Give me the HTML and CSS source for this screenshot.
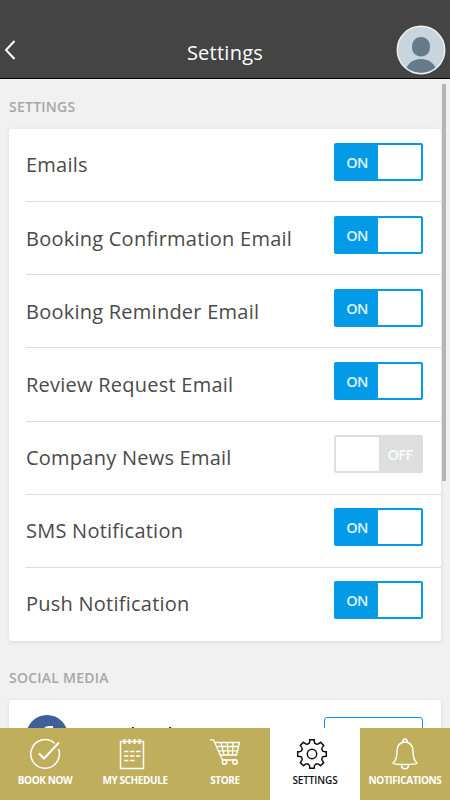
FILE: index.html
```html
<!DOCTYPE html>
<html lang="en">
<head>
<meta charset="utf-8">
<title>Settings</title>
<link rel="stylesheet" href="styles.css">
</head>
<body>
<div class="app">
  <header class="header">
    <svg class="back" width="12" height="20" viewBox="0 0 12 20"><path d="M10.500 1 2 10l8.500 9"/></svg>
    <h1 class="title">Settings</h1>
    <svg class="avatar" width="50" height="50" viewBox="0 0 50 50">
      <defs><clipPath id="face"><circle cx="25" cy="25" r="23"/></clipPath></defs>
      <circle cx="25" cy="25" r="23.500" fill="#c8d5de"/>
      <g clip-path="url(#face)" fill="#667b8a">
        <path d="M25 12c6 0 9 4.500 9 10 0 6-4 9.500-9 9.500s-9-3.500-9-9.500c0-5.500 3-10 9-10z"/>
        <path d="M9 50c0-10 7-16 16-16s16 6 16 16z"/>
      </g>
      <circle cx="25" cy="25" r="23.700" fill="none" stroke="#eef0f1" stroke-width="1.500"/>
    </svg>
  </header>
  <main class="content">
    <h2 class="heading">SETTINGS</h2>
    <section class="card">
      <div class="row"><span class="label">Emails</span><div class="toggle"><span>ON</span><i></i></div></div>
      <div class="row"><span class="label">Booking Confirmation Email</span><div class="toggle"><span>ON</span><i></i></div></div>
      <div class="row"><span class="label">Booking Reminder Email</span><div class="toggle"><span>ON</span><i></i></div></div>
      <div class="row"><span class="label">Review Request Email</span><div class="toggle"><span>ON</span><i></i></div></div>
      <div class="row"><span class="label">Company News Email</span><div class="toggle off"><i></i><span>OFF</span></div></div>
      <div class="row"><span class="label">SMS Notification</span><div class="toggle"><span>ON</span><i></i></div></div>
      <div class="row"><span class="label">Push Notification</span><div class="toggle"><span>ON</span><i></i></div></div>
    </section>
    <h2 class="heading social">SOCIAL MEDIA</h2>
    <section class="card">
      <div class="account">
        <svg width="42" height="42" viewBox="0 0 42 42"><circle cx="21" cy="21" r="21" fill="#3f5f98"/><path fill="#fff" d="M27 11h-4c-4 0-6 2.500-6 6v4h-4v5h4v12h5V26h4l1-5h-5v-3c0-1.500.5-2 2-2h3z"/></svg>
        <span class="network">Facebook</span>
        <span class="connect"></span>
      </div>
    </section>
    <div class="scrollbar"></div>
  </main>
  <nav class="nav">
    <div class="tab">
      <svg width="32" height="32" viewBox="0 0 32 32"><path d="M25.500 5.200A14.300 14.300 0 1 0 29.500 11" /><path d="m10 15.500 5 5L30 4.500" stroke-width="2"/></svg>
      <span>BOOK NOW</span>
    </div>
    <div class="tab">
      <svg class="schedule" width="32" height="32" viewBox="0 0 32 32"><path d="M4.500 3.500h23v27h-23z"/><path d="M8.500 1v5M13.500 1v5M18.500 1v5M23.500 1v5" stroke-width="2"/><path d="M8 13.500h4.500M14 13.500h4.500M20 13.500h4.500M8 18h4.500M14 18h4.500M20 18h4.500M8 22.500h4.500M14 22.500h4.500"/></svg>
      <span>MY SCHEDULE</span>
    </div>
    <div class="tab">
      <svg width="32" height="32" viewBox="0 0 32 32"><path d="M1 1.800h3.500L13.500 22H27M5.500 4.500h25L27.500 17h-16M7 8.500h22.500M9.500 12.800h19M12 4.500l3 12.500M18 4.500 19.500 17M24 4.500 23.500 17" stroke-width="1.300"/><circle cx="15.500" cy="24" r="2.200"/><circle cx="26" cy="24" r="2.200"/></svg>
      <span>STORE</span>
    </div>
    <div class="tab active">
      <svg width="32" height="32" viewBox="-16 -16 32 32"><path d="M-3.200-10.600Q-2.200-11-2.200-14.300H2.200Q2.200-11 3.200-10.600 4.300-9.700 5.200-9.800 6-9.700 8.600-11.700L11.700-8.600Q9.700-6 9.800-5.200 9.700-4.300 10.600-3.200 11-2.200 14.300-2.200V2.200Q11 2.200 10.600 3.200 9.700 4.300 9.800 5.200 9.700 6 11.700 8.600L8.600 11.700Q6 9.700 5.200 9.800 4.300 9.700 3.200 10.600 2.200 11 2.200 14.300H-2.200Q-2.200 11-3.200 10.600-4.300 9.700-5.200 9.800-6 9.700-8.600 11.700L-11.700 8.600Q-9.700 6-9.800 5.200-9.700 4.300-10.600 3.200-11 2.200-14.300 2.200V-2.200Q-11-2.200-10.600-3.200-9.700-4.300-9.800-5.200-9.700-6-11.700-8.600L-8.600-11.700Q-6-9.700-5.200-9.800-4.300-9.700-3.200-10.600Z"/><circle r="4.700"/></svg>
      <span>SETTINGS</span>
    </div>
    <div class="tab">
      <svg width="32" height="32" viewBox="0 0 32 32"><path d="M16 4C10.500 4 8 8.500 8 13c0 7-1 9.500-4 12 0 1.200 4 1.500 12 1.500s12-.3 12-1.500c-3-2.500-4-5-4-12 0-4.500-2.500-9-8-9z"/><path d="M13.800 4c0-4 4.400-4 4.400 0M12.500 27c0 5 7 5 7 0"/></svg>
      <span>NOTIFICATIONS</span>
    </div>
  </nav>
</div>
</body>
</html>
```
FILE: styles.css
```css
* {
  box-sizing: border-box;
}

body {
  margin: 0;
  font-family: "Open Sans", sans-serif;
}

.app {
  display: flex;
  flex-direction: column;
  width: 450px;
  height: 800px;
  overflow: hidden;
  background: #f1f1f1;
}

.header {
  flex: none;
  display: grid;
  grid-template-columns: 60px 1fr 60px;
  align-items: center;
  height: 79px;
  padding-top: 22px;
  background: #444;
  border-bottom: 1px solid #000;
}

.back {
  margin: 0 0 0 4px;
  fill: none;
  stroke: #fff;
  stroke-width: 2;
}

.title {
  margin: 5px 0 0;
  color: #fff;
  font-size: 20px;
  font-weight: 400;
  letter-spacing: 0.25px;
  line-height: 28px;
  text-align: center;
}

.avatar {
  margin: 0 0 0 6px;
}

.content {
  position: relative;
  flex: 1;
  min-height: 0;
  padding: 18px 9px 0;
  overflow: hidden;
}

.heading {
  margin: 0 0 12px;
  height: 20px;
  color: #a6a7a7;
  font-size: 14px;
  font-weight: 600;
  letter-spacing: 0.25px;
  line-height: 20px;
}

.heading.social {
  margin: 27px 0 12px;
}

.card {
  padding-left: 17px;
  background: #fff;
  border-radius: 3px;
  box-shadow: 0 1px 4px rgba(0, 0, 0, 0.1);
}

.row {
  display: flex;
  justify-content: space-between;
  height: 73.14px;
  padding: 13.6px 18px 0 0;
  border-bottom: 1px solid #dcdcdc;
}

.row:last-child {
  border-bottom: 0;
}

.label {
  padding-top: 8.9px;
  color: #4a4a4a;
  font-size: 20px;
  font-weight: 400;
  letter-spacing: 0.24px;
  line-height: 28px;
}

.toggle {
  display: flex;
  width: 89px;
  height: 38px;
  padding: 2px;
  background: #039be8;
  border-radius: 2px;
  color: #fff;
  font-size: 14.5px;
  font-weight: 600;
  letter-spacing: -0.6px;
  line-height: 35px;
  text-align: center;
}

.toggle span {
  flex: 1;
  opacity: 0.88;
}

.toggle i {
  width: 43px;
  background: #fff;
}

.toggle.off {
  background: #dddfdf;
}

.account {
  display: flex;
  align-items: flex-start;
  height: 90px;
  padding: 15px 18px 0 0;
}

.network {
  flex: 1;
  padding: 5px 0 0 19px;
  color: #000;
  font-size: 20.5px;
  line-height: 28px;
}

.connect {
  width: 99px;
  height: 40px;
  margin-top: 2px;
  border: 1px solid #039be8;
  border-radius: 3px;
}

.scrollbar {
  position: absolute;
  top: 5px;
  right: 4px;
  width: 4px;
  height: 397px;
  background: #b5b5b5;
}

.nav {
  flex: none;
  display: grid;
  grid-template-columns: repeat(5, 1fr);
  height: 72px;
  background: #bfae5c;
}

.tab {
  display: flex;
  flex-direction: column;
  align-items: center;
  padding-top: 10px;
  color: #fff;
  font-size: 10px;
  font-weight: 700;
  letter-spacing: -0.4px;
  line-height: 14px;
}

.tab svg {
  flex: none;
  margin-bottom: 3px;
  fill: none;
  stroke: currentColor;
  stroke-width: 1.5;
}

.tab svg.schedule {
  position: relative;
  left: -3px;
}

.tab.active {
  background: #fff;
  color: #111;
  font-weight: 600;
  letter-spacing: -0.1px;
}

.tab.active svg {
  position: relative;
  left: -3px;
}
```
